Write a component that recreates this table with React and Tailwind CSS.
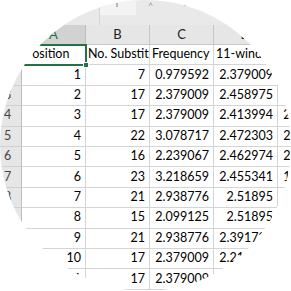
const cols = ["A", "B", "C", "D", "E"];

const rows = [
  [2, "1", "7", "0.979592", "2.379009", ""],
  [3, "2", "17", "2.379009", "2.458975", ""],
  [4, "3", "17", "2.379009", "2.413994", "2.416035"],
  [5, "4", "22", "3.078717", "2.472303", "2.456023"],
  [6, "5", "16", "2.239067", "2.462974", "2.416035"],
  [7, "6", "23", "3.218659", "2.455341", "1.976091"],
  [8, "7", "21", "2.938776", "2.51895", "2.416035"],
  [9, "8", "15", "2.099125", "2.51895", "2.456023"],
  [10, "9", "21", "2.938776", "2.391723", "2.416035"],
  [11, "10", "17", "2.379009", "2.215743", "2.416035"],
  [12, "11", "17", "2.379009", "2.215743", "2.416035"],
];

const font = { fontFamily: "Lato, 'Liberation Sans', sans-serif" };

function Cell({ children, align = "right", className = "" }) {
  return (
    <div
      className={`h-[20.4px] border-r border-b border-[#d4d4d4] bg-white overflow-hidden whitespace-nowrap flex items-center text-[12.5px] text-black ${
        align === "right" ? "justify-end pr-[4px]" : "justify-start pl-[2px]"
      } ${className}`}
    >
      {children}
    </div>
  );
}

function RowHead({ children }) {
  return (
    <div className="h-[20.4px] border-r border-b border-r-[#bdbdbd] border-b-[#d0d0d0] bg-[#e6e6e6] flex items-center justify-start pl-[4px] text-[12.5px] text-[#444]">
      {children}
    </div>
  );
}

export default function App() {
  return (
    <div className="w-[291px] h-[291px] bg-white" style={font}>
      <div className="w-[291px] h-[291px] rounded-full overflow-hidden bg-white">
        {/* formula bar strip */}
        <div className="h-[25px] bg-[#e9e9e9] flex">
          <div className="w-[100px] border-r border-[#d6d6d6]" />
          <div className="w-[36px] h-[15px] bg-[#f3f3f3] relative">
            <span className="absolute left-[16px] top-[3px] w-[2px] h-[4px] bg-[#b8b8b8]" />
          </div>
          <div className="flex-1 relative">
            <span className="absolute left-[12px] top-[1px] text-[9px] text-[#9a9a9a] leading-none">^</span>
            <span className="absolute left-[48px] top-[5px] w-[3px] h-[1px] bg-[#aaa]" />
          </div>
        </div>

        <div className="grid grid-cols-[22px_64px_64px_64px_64px_64px]">
          {/* column headers */}
          <div className="h-[20px] bg-[#e6e6e6] border-r border-b border-[#bdbdbd]" />
          {cols.map((c) => (
            <div
              key={c}
              className={`h-[20px] border-r border-b flex items-center justify-center text-[13px] ${
                c === "A"
                  ? "bg-[#d2d2d2] text-[#217346] border-r-[#bdbdbd] border-b-[#217346]"
                  : "bg-[#e6e6e6] text-[#222] border-[#c6c6c6]"
              }`}
            >
              {c}
            </div>
          ))}

          {/* header row 1 */}
          <RowHead>1</RowHead>
          <div className="relative">
            <Cell align="left" className="pl-[3px]">
              Position
            </Cell>
            <div className="absolute -top-[1px] -left-[2px] -right-[1px] -bottom-[1px] border-2 border-[#217346] pointer-events-none" />
            <div className="absolute -right-[3px] -bottom-[3px] w-[6px] h-[6px] bg-[#217346] border border-white" />
          </div>
          <Cell align="left">No. Substitutions</Cell>
          <Cell align="left">Frequency</Cell>
          <Cell align="left">11-window</Cell>
          <Cell align="left">21-window</Cell>

          {rows.map(([n, a, b, c, d, e]) => (
            <div key={n} className="contents">
              <RowHead>{n}</RowHead>
              <Cell>{a}</Cell>
              <Cell>{b}</Cell>
              <Cell>{c}</Cell>
              <Cell>{d}</Cell>
              <Cell>{e}</Cell>
            </div>
          ))}
        </div>
      </div>
    </div>
  );
}
